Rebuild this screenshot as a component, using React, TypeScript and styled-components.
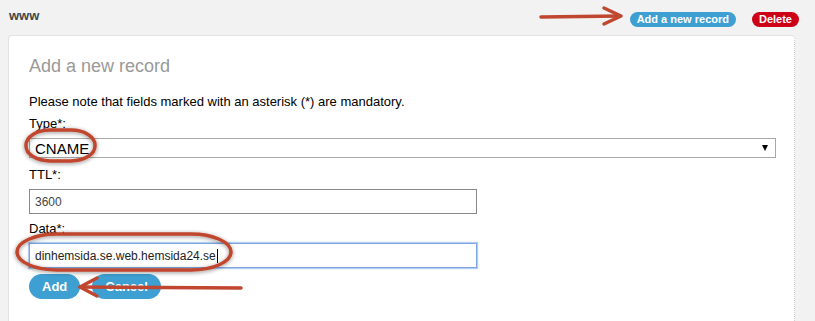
import React from "react";
import styled, { createGlobalStyle } from "styled-components";

const GlobalStyle = createGlobalStyle`
  html, body { margin: 0; padding: 0; }
  body {
    background: #f2f2f2;
    font-family: "Liberation Sans", Arial, sans-serif;
    color: #000;
  }
`;

const Page = styled.div`
  position: relative;
  width: 815px;
  height: 321px;
  overflow: hidden;
  box-sizing: border-box;
  padding: 0 20px 0 8px;
`;

const TopBar = styled.div`
  display: flex;
  align-items: center;
  justify-content: space-between;
  height: 35px;
`;

const ZoneName = styled.div`
  font-size: 13px;
  font-weight: bold;
  color: #444;
  padding-left: 1px;
  margin-top: -5px;
`;

const Actions = styled.div`
  display: flex;
  gap: 16px;
  margin-right: -4px;
  margin-top: 4px;
`;

const Pill = styled.button<{ $tone: "blue" | "red" }>`
  border: none;
  border-radius: 8px;
  height: 15px;
  padding: 0 7px;
  font-family: "Liberation Sans", Arial, sans-serif;
  font-size: 11px;
  font-weight: bold;
  color: #fff;
  line-height: 15px;
  background: ${(p) => (p.$tone === "blue" ? "#3e9fd2" : "#cc0016")};
`;

const Card = styled.div`
  background: #fff;
  border: 1px solid #e2e2e2;
  border-right: 1px dotted #cfcfcf;
  border-bottom: none;
  border-radius: 4px 4px 0 0;
  padding: 20px 19px 0 20px;
  height: 286px;
`;

const Heading = styled.h2`
  margin: 0 0 17px;
  font-size: 18px;
  font-weight: normal;
  color: #999;
  line-height: 21px;
`;

const Note = styled.p`
  margin: 0 0 7px;
  font-size: 13px;
  line-height: 15px;
`;

const Field = styled.div<{ $full?: boolean }>`
  display: flex;
  flex-direction: column;
  width: ${(p) => (p.$full ? "747px" : "448px")};
`;

const Label = styled.label`
  font-size: 13px;
  line-height: 15px;
  margin-bottom: 7px;
  color: #000;
`;

const SelectBox = styled.div`
  display: flex;
  align-items: center;
  justify-content: space-between;
  height: 18px;
  border: 1px solid #a9a9a9;
  padding: 0 7px 0 5px;
  font-size: 15px;
  margin-bottom: 9px;
`;

const Caret = styled.span`
  width: 0;
  height: 0;
  border-left: 3.5px solid transparent;
  border-right: 3.5px solid transparent;
  border-top: 6px solid #000;
`;

const Input = styled.div<{ $focus?: boolean }>`
  display: flex;
  align-items: center;
  height: 23px;
  border: 1px solid ${(p) => (p.$focus ? "#7ea6e0" : "#888")};
  box-shadow: ${(p) => (p.$focus ? "0 0 1px 1px #b3ccf0" : "none")};
  padding: 0 5px;
  font-size: 12px;
  color: ${(p) => (p.$focus ? "#222" : "#444")};
  margin-bottom: ${(p) => (p.$focus ? "6px" : "7px")};
`;

const Cursor = styled.span`
  display: inline-block;
  width: 1px;
  height: 14px;
  background: #000;
  margin-left: 1px;
`;

const ButtonRow = styled.div`
  display: flex;
  gap: 12px;
`;

const RoundButton = styled.button`
  border: none;
  height: 25px;
  border-radius: 13px;
  background: #3e9fd2;
  color: #fff;
  font-family: "Liberation Sans", Arial, sans-serif;
  font-size: 13px;
  font-weight: bold;
  padding: 0 13px;
`;

const Overlay = styled.svg`
  position: absolute;
  left: 0;
  top: 0;
  pointer-events: none;
`;

export default function App() {
  return (
    <>
      <GlobalStyle />
      <Page>
        <TopBar>
          <ZoneName>www</ZoneName>
          <Actions>
            <Pill $tone="blue">Add a new record</Pill>
            <Pill $tone="red">Delete</Pill>
          </Actions>
        </TopBar>
        <Card>
          <Heading>Add a new record</Heading>
          <Note>Please note that fields marked with an asterisk (*) are mandatory.</Note>
          <Field $full>
            <Label>Type*:</Label>
            <SelectBox>
              <span>CNAME</span>
              <Caret />
            </SelectBox>
          </Field>
          <Field>
            <Label>TTL*:</Label>
            <Input>3600</Input>
          </Field>
          <Field>
            <Label>Data*:</Label>
            <Input $focus>
              dinhemsida.se.web.hemsida24.se
              <Cursor />
            </Input>
          </Field>
          <ButtonRow>
            <RoundButton>Add</RoundButton>
            <RoundButton>Cancel</RoundButton>
          </ButtonRow>
        </Card>
        <Overlay width="815" height="321" viewBox="0 0 815 321">
          <defs>
            <filter id="sh" x="-20%" y="-40%" width="140%" height="180%">
              <feGaussianBlur in="SourceAlpha" stdDeviation="2" />
              <feOffset dx="0" dy="1" />
              <feComponentTransfer>
                <feFuncA type="linear" slope="0.45" />
              </feComponentTransfer>
              <feMerge>
                <feMergeNode />
                <feMergeNode in="SourceGraphic" />
              </feMerge>
            </filter>
          </defs>
          <g stroke="#c0462f" fill="none" strokeLinecap="round" strokeLinejoin="round">
            <rect x="26" y="130" width="69" height="31" rx="24" ry="15" strokeWidth="3.5" filter="url(#sh)" />
            <rect x="17" y="234" width="214" height="36" rx="40" ry="18" strokeWidth="3.5" filter="url(#sh)" />
            <path d="M541 17 L620 16" strokeWidth="3.5" />
            <path d="M604 8 L621 16 L604 24" strokeWidth="3.5" />
            <path d="M241 288 L80 287" strokeWidth="3.5" />
            <path d="M97 278 L80 287 L97 296" strokeWidth="3.5" />
          </g>
        </Overlay>
      </Page>
    </>
  );
}
